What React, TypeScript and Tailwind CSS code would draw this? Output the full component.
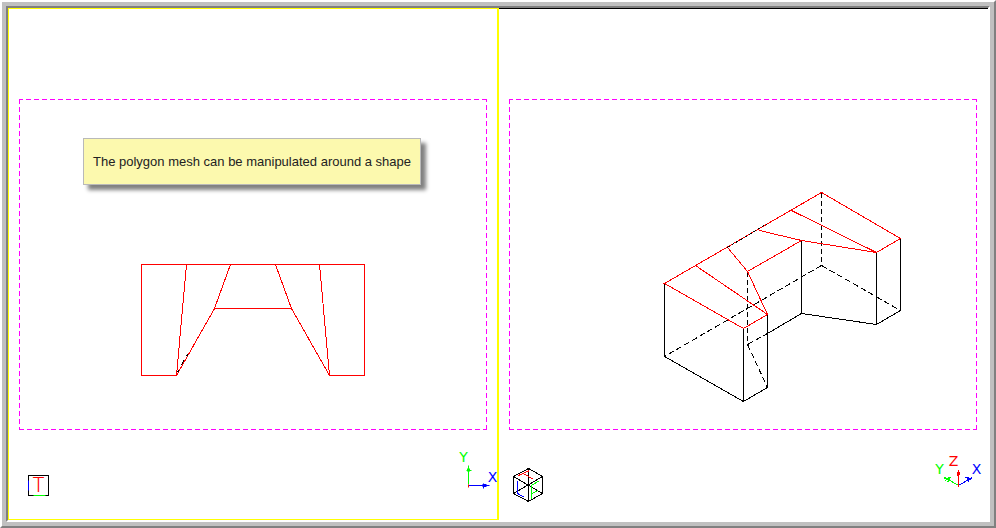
import { ReactNode } from "react";

const DASH = "5 3";
const SLANTED_DASH = "6 3";

interface StrokeProps {
  d: string
  color?: string
  dash?: string
  offset?: number
}

function Stroke({ d, color = "stroke-black", dash, offset }: StrokeProps) {
  return (
    <path
      d={d}
      className={`fill-none stroke-1 ${color}`}
      strokeDasharray={dash}
      strokeDashoffset={offset}
    />
  );
}

interface LabelProps {
  x: number
  y: number
  className: string
  children: ReactNode
}

function Label({ x, y, className, children }: LabelProps) {
  return (
    <text x={x} y={y} textAnchor="middle" className={className}>
      {children}
    </text>
  );
}

interface DrawingProps {
  title: string
  viewBox: string
  children: ReactNode
}

function Drawing({ title, viewBox, children }: DrawingProps) {
  return (
    <svg
      viewBox={viewBox}
      role="img"
      aria-label={title}
      shapeRendering="crispEdges"
      className="block w-full h-full"
    >
      <g transform="translate(.5 .5)">{children}</g>
    </svg>
  );
}

function Limits({ x }: { x: number }) {
  return (
    <g shapeRendering="geometricPrecision">
      <g transform="translate(-.5 0)">
        <Stroke color="stroke-[#ff00ff]" dash={DASH} offset={1} d={`M${x} 99h468`} />
        <Stroke color="stroke-[#ff00ff]" dash={DASH} d={`M${x} 429h468`} />
      </g>
      <g transform="translate(0 -.5)">
        <Stroke color="stroke-[#ff00ff]" dash={DASH} d={`M${x} 99v331`} />
        <Stroke color="stroke-[#ff00ff]" dash={DASH} offset={2} d={`M${x + 467} 99v331`} />
      </g>
    </g>
  );
}

function TopView() {
  return (
    <Drawing title="Top view" viewBox="9 9 488 510">
      <Limits x={19} />

      {/* mesh */}
      <Stroke color="stroke-[#ff0000]" d="M176 375H141V264H364V375H329" />
      <Stroke color="stroke-[#ff0000]" d="M186 264L176 375L214 308L230 264" />
      <Stroke color="stroke-[#ff0000]" d="M275 264L291 308L329 375L319 264" />
      <Stroke color="stroke-[#ff0000]" d="M214 308H291" />
      <Stroke d="M183 360L181 365M187 354L186 356M178 370L177 372" />

      {/* view marker */}
      <Stroke d="M28 475H48V495H28Z" />
      <g shapeRendering="geometricPrecision">
        <Stroke color="stroke-[#0000ff]" d="M28 480V490" />
        <Stroke color="stroke-[#00ff00]" d="M33 495H45" />
      </g>
      <Label x={38} y={491} className="font-['Roboto',sans-serif] text-[20px] font-light fill-[#ff0000]">T</Label>

      {/* axes */}
      <g shapeRendering="geometricPrecision">
        <Stroke color="stroke-[#00ff00]" d="M468 465V484M467 468V471M469 468V471M466 470H471" />
        <Stroke color="stroke-[#0000ff]" d="M468 485H489M482 484H486M482 486H486M483 483V488" />
        <Stroke color="stroke-[#ff0000]" d="M468 484V487" />
      </g>
      <Label x={463} y={461} className="font-['DejaVu_Sans',sans-serif] text-[14px] fill-[#00ff00]">Y</Label>
      <Label x={492} y={481} className="font-['DejaVu_Sans',sans-serif] text-[14px] fill-[#0000ff]">X</Label>
    </Drawing>
  );
}

function IsoView() {
  return (
    <Drawing title="Isometric view" viewBox="499 9 489 511">
      <Limits x={509} />

      {/* solid */}
      <Stroke d="M664 283V356L743 401V328M743 401L767 387V314" />
      <Stroke d="M767 333L801 313V240M801 313L876 324V252M876 324L900 310V238" />
      <Stroke dash={DASH} d="M821 192V265" />
      <Stroke dash={SLANTED_DASH} d="M821 265L664 356" />
      <Stroke dash={SLANTED_DASH} d="M821 265L900 310" />
      <Stroke dash={DASH} d="M747 271V344" />
      <Stroke dash={SLANTED_DASH} d="M747 344L767 387" />
      <Stroke dash={SLANTED_DASH} d="M747 344L767 333" />

      {/* mesh */}
      <Stroke color="stroke-[#ff0000]" d="M664 283L821 192L900 238L876 252L801 240L747 271L767 314L743 328Z" />
      <Stroke color="stroke-[#ff0000]" d="M695 265L767 314M727 247L747 271M759 230L801 240M791 210L876 252" />
      <Stroke dash="3 2" d="M727 247L767 223" />

      {/* view marker */}
      <Stroke d="M528 468L542 476V493L528 501L513 493V476Z" />
      <Stroke d="M528 468V501M513 476L542 493M542 476L513 493" />
      <Stroke color="stroke-[#ff0000]" d="M518 475L529 470M523 473L533 479" />
      <Stroke color="stroke-[#0000ff]" d="M517 480V493L524 497" />
      <Stroke color="stroke-[#00ff00]" d="M531 498V485L539 480M531 493L538 490" />

      {/* axes */}
      <Stroke color="stroke-[#00ff00]" d="M958 485L944 477M944 478L951 477M945 480L950 477M947 482L950 477" />
      <Stroke color="stroke-[#0000ff]" d="M958 485L972 477M972 478L965 477M971 480L966 477M969 482L966 477" />
      <Stroke color="stroke-[#ff0000]" d="M958 469V486M957 471V475M959 471V474" />
      <Label x={939} y={473} className="font-['DejaVu_Sans',sans-serif] text-[14px] fill-[#00ff00]">Y</Label>
      <Label x={953} y={465} className="font-['DejaVu_Sans',sans-serif] text-[14px] fill-[#ff0000]">Z</Label>
      <Label x={976} y={473} className="font-['DejaVu_Sans',sans-serif] text-[14px] fill-[#0000ff]">X</Label>
    </Drawing>
  );
}

export default function App() {
  return (
    <div className="
      flex h-screen bg-[#c0c0c0] p-1
      border-2 border-t-white border-l-white border-r-[#808080] border-b-[#808080]
    ">
      <main className="
        grid flex-1 grid-cols-[491fr_489fr] bg-white
        border-2 border-t-[#808080] border-l-[#808080] border-r-white border-b-white
      ">
        <section className="relative min-w-0 min-h-0 border border-r-2 border-[#ffff00]">
          <TopView />
          <div className="
            absolute left-[74px] top-[129px] border border-[#b9b9b9] bg-[#fcf9ae]
            px-[9px] py-[13px] text-[13px] leading-[19px] text-[#222222] whitespace-nowrap
            font-['Liberation_Sans',Arial,sans-serif] shadow-[5px_5px_4px_#808080]
          ">
            The polygon mesh can be manipulated around a shape
          </div>
        </section>
        <section className="min-w-0 min-h-0 border-t border-black">
          <IsoView />
        </section>
      </main>
    </div>
  );
}
